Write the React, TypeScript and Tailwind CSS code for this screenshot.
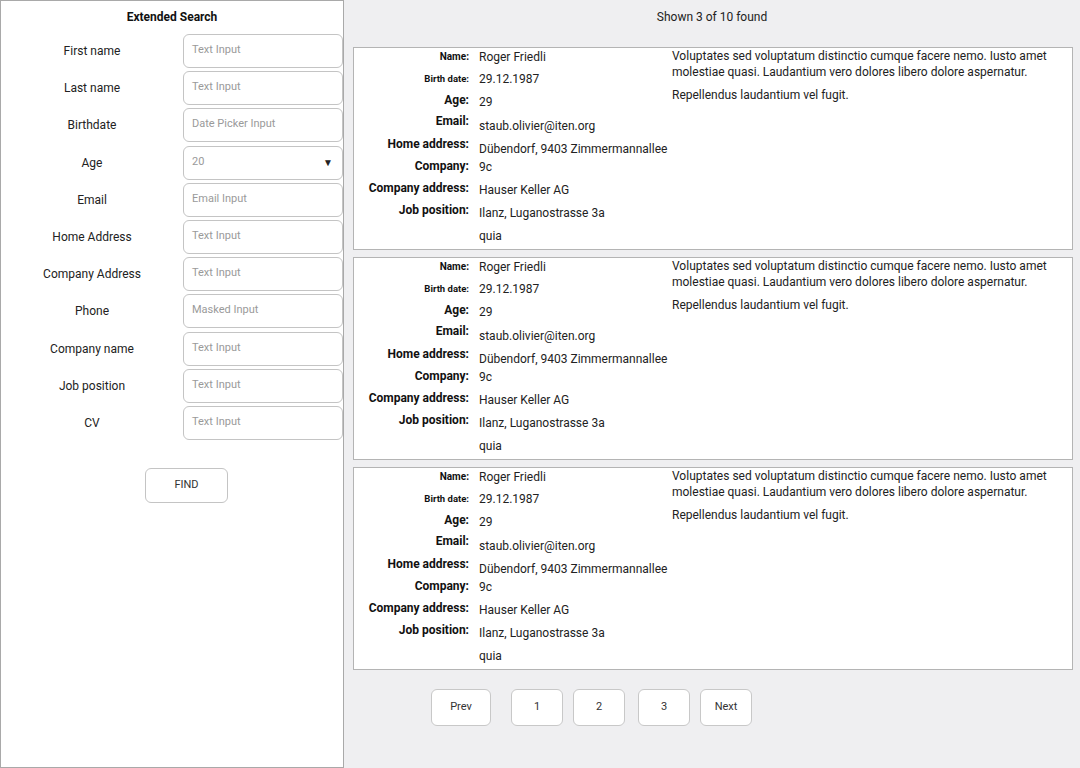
const formFields = [
  { label: "First name", placeholder: "Text Input" },
  { label: "Last name", placeholder: "Text Input" },
  { label: "Birthdate", placeholder: "Date Picker Input" },
  { label: "Age", placeholder: "20", select: true },
  { label: "Email", placeholder: "Email Input" },
  { label: "Home Address", placeholder: "Text Input" },
  { label: "Company Address", placeholder: "Text Input" },
  { label: "Phone", placeholder: "Masked Input" },
  { label: "Company name", placeholder: "Text Input" },
  { label: "Job position", placeholder: "Text Input" },
  { label: "CV", placeholder: "Text Input" },
];

// label offsets are a bit irregular in the original, kept as-is
const personRows = [
  { label: "Name:", value: "Roger Friedli", h: "h-[22px]", lc: "text-[10px] mt-0" },
  { label: "Birth date:", value: "29.12.1987", h: "h-[23px]", lc: "text-[9.5px] mt-0" },
  { label: "Age:", value: "29", h: "h-[24px]", lc: "text-[12px] -mt-[2px]" },
  { label: "Email:", value: "staub.olivier@iten.org", h: "h-[23px]", lc: "text-[12px] -mt-[5px]" },
  { label: "Home address:", value: "Dübendorf, 9403 Zimmermannallee", h: "h-[18px]", lc: "text-[12px] -mt-[5px]" },
  { label: "Company:", value: "9c", h: "h-[23px]", lc: "text-[12px] -mt-[1px]" },
  { label: "Company address:", value: "Hauser Keller AG", h: "h-[23px]", lc: "text-[12px] -mt-[2px]" },
  { label: "Job position:", value: "Ilanz, Luganostrasse 3a", h: "h-[23px]", lc: "text-[12px] -mt-[3px]" },
  { label: "", value: "quia", h: "h-[16px]", lc: "text-[12px]" },
];

const SearchPanel = () => {
  return (
    <div className="flex h-[768px] w-[344px] shrink-0 flex-col border border-[#a9a9a9] bg-white">
      <div className="pt-[8px] text-center text-[12px] font-bold leading-[16px] text-[#111]">
        Extended Search
      </div>
      <div className="mt-[9px] flex flex-col gap-[3.2px]">
        {formFields.map((f) => (
          <div key={f.label} className="flex h-[34px] items-center">
            <div className="w-[182px] shrink-0 text-center text-[12px] text-[#222]">{f.label}</div>
            <div className="flex h-[34px] w-[160px] shrink-0 items-start justify-between rounded-[6px] border border-[#c4c4c4] bg-white pl-[8px] pr-[9px] pt-[8px] text-[11px] leading-[14px] text-[#9a9a9a]">
              <span>{f.placeholder}</span>
              {f.select && <span className="pt-[1px] text-[10px] text-[#222]">▼</span>}
            </div>
          </div>
        ))}
      </div>
      <div className="mt-[28px] flex pl-[144px]">
        <button className="h-[35px] w-[83px] rounded-[6px] border border-[#c4c4c4] bg-white text-[11px] text-[#333]">
          FIND
        </button>
      </div>
    </div>
  );
};

const PersonCard = () => {
  return (
    <div className="flex h-[203px] border border-[#b4b4b4] bg-white">
      <div className="flex w-[318px] shrink-0 flex-col pt-[1px]">
        {personRows.map((r, i) => (
          <div key={i} className={`flex items-start ${r.h}`}>
            <div className={`w-[115px] shrink-0 text-right font-bold leading-[16px] text-[#111] ${r.lc}`}>
              {r.label}
            </div>
            <div className="pl-[10px] text-[12px] leading-[16px] whitespace-nowrap text-[#222]">
              {r.value}
            </div>
          </div>
        ))}
      </div>
      <div className="w-[390px] text-[12px] leading-[16px] text-[#222]">
        <p className="mb-[7px]">
          Voluptates sed voluptatum distinctio cumque facere nemo. Iusto amet molestiae quasi. Laudantium vero
          dolores libero dolore aspernatur.
        </p>
        <p>Repellendus laudantium vel fugit.</p>
      </div>
    </div>
  );
};

const PageButton = ({ label, className }: { label: string; className: string }) => (
  <button
    className={`h-[37px] rounded-[6px] border border-[#c8c8c8] bg-white text-[11px] text-[#333] ${className}`}
  >
    {label}
  </button>
);

const Results = () => {
  return (
    <div className="flex flex-1 flex-col bg-[#efeff1]">
      <div className="pt-[9px] text-center text-[12px] leading-[16px] text-[#222]">Shown 3 of 10 found</div>
      <div className="mt-[22px] flex flex-col gap-[7px] pl-[9px] pr-[7px]">
        <PersonCard />
        <PersonCard />
        <PersonCard />
      </div>
      <div className="mt-[19px] flex pl-[87px]">
        <PageButton label="Prev" className="w-[60px]" />
        <PageButton label="1" className="ml-[20px] w-[52px]" />
        <PageButton label="2" className="ml-[10px] w-[52px]" />
        <PageButton label="3" className="ml-[13px] w-[52px]" />
        <PageButton label="Next" className="ml-[10px] w-[52px]" />
      </div>
    </div>
  );
};

export default function App() {
  return (
    <div className="flex h-[768px] w-[1080px] overflow-hidden font-['Roboto',sans-serif]">
      <SearchPanel />
      <Results />
    </div>
  );
}
